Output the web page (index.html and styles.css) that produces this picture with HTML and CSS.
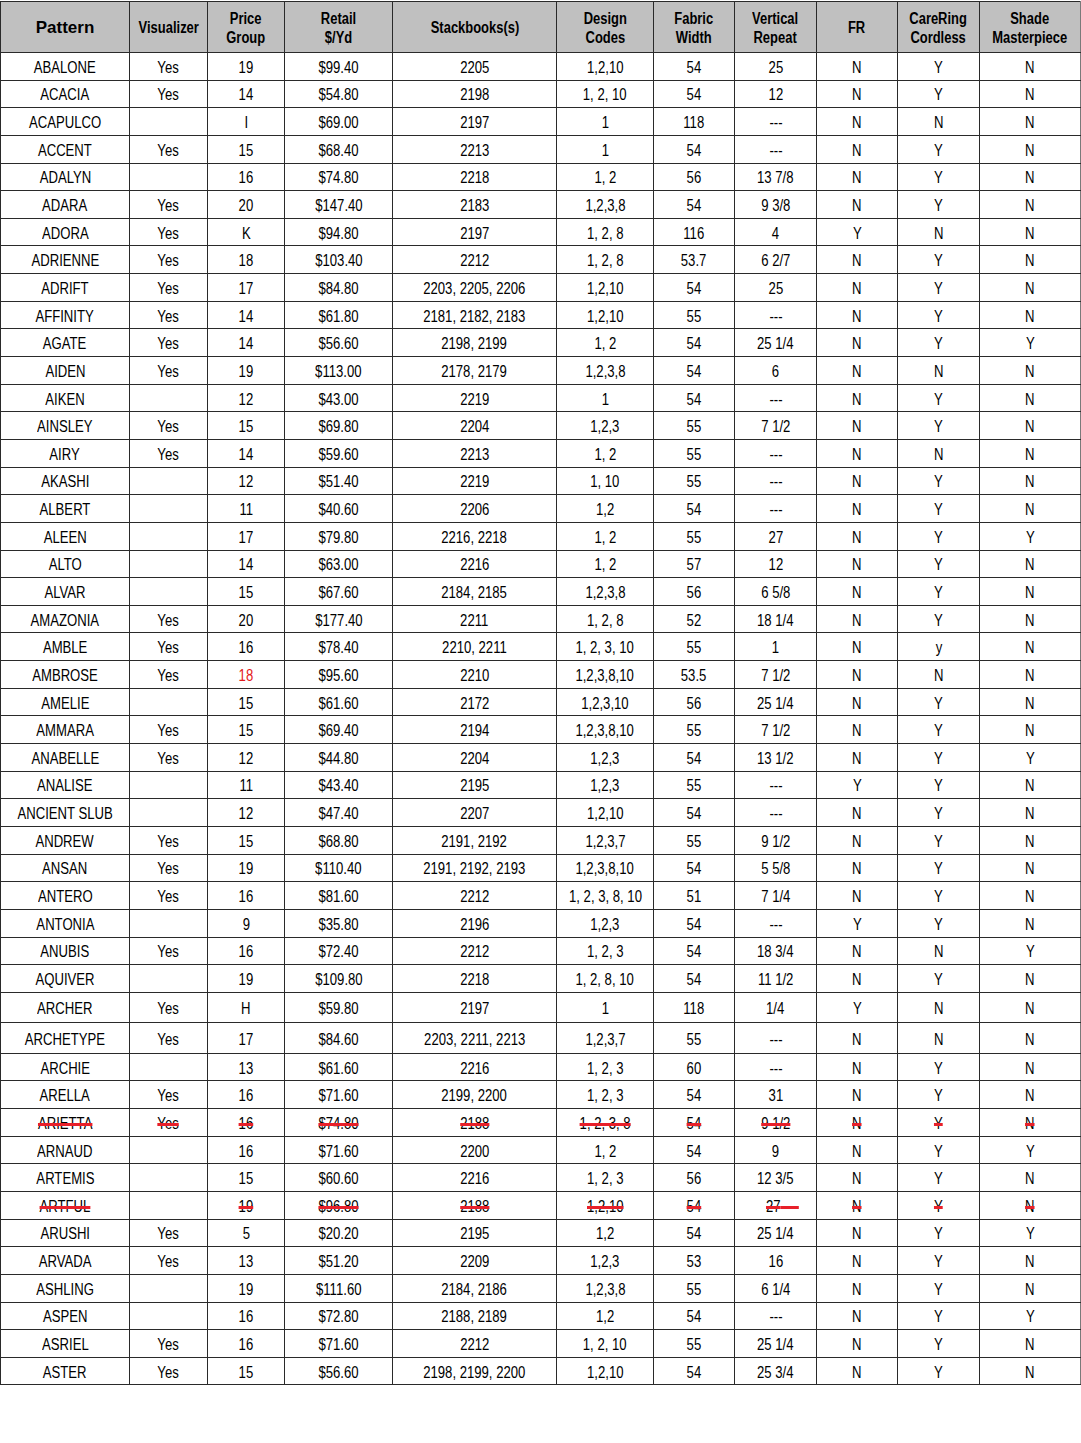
FILE: index.html
```html
<!DOCTYPE html>
<html>
<head>
<meta charset="utf-8">
<link rel="stylesheet" href="styles.css">
</head>
<body>
<table class="grid">
<colgroup>
<col class="c1"><col class="c2"><col class="c3"><col class="c4"><col class="c5"><col class="c6"><col class="c7"><col class="c8"><col class="c9"><col class="c10"><col class="c11">
</colgroup>
<thead>
<tr class="head">
<th class="pattern">Pattern</th><th><span>Visualizer</span></th><th><span>Price<br>Group</span></th><th><span>Retail<br>$/Yd</span></th><th><span>Stackbooks(s)</span></th><th><span>Design<br>Codes</span></th><th><span>Fabric<br>Width</span></th><th><span>Vertical<br>Repeat</span></th><th><span>FR</span></th><th><span>CareRing<br>Cordless</span></th><th><span>Shade<br>Masterpiece</span></th>
</tr>
</thead>
<tbody>
<tr><td><span>ABALONE</span></td><td><span>Yes</span></td><td><span>19</span></td><td><span>$99.40</span></td><td><span>2205</span></td><td><span>1,2,10</span></td><td><span>54</span></td><td><span>25</span></td><td><span>N</span></td><td><span>Y</span></td><td><span>N</span></td></tr>
<tr><td><span>ACACIA</span></td><td><span>Yes</span></td><td><span>14</span></td><td><span>$54.80</span></td><td><span>2198</span></td><td><span>1, 2, 10</span></td><td><span>54</span></td><td><span>12</span></td><td><span>N</span></td><td><span>Y</span></td><td><span>N</span></td></tr>
<tr><td><span>ACAPULCO</span></td><td></td><td><span>I</span></td><td><span>$69.00</span></td><td><span>2197</span></td><td><span>1</span></td><td><span>118</span></td><td><span>---</span></td><td><span>N</span></td><td><span>N</span></td><td><span>N</span></td></tr>
<tr><td><span>ACCENT</span></td><td><span>Yes</span></td><td><span>15</span></td><td><span>$68.40</span></td><td><span>2213</span></td><td><span>1</span></td><td><span>54</span></td><td><span>---</span></td><td><span>N</span></td><td><span>Y</span></td><td><span>N</span></td></tr>
<tr><td><span>ADALYN</span></td><td></td><td><span>16</span></td><td><span>$74.80</span></td><td><span>2218</span></td><td><span>1, 2</span></td><td><span>56</span></td><td><span>13 7/8</span></td><td><span>N</span></td><td><span>Y</span></td><td><span>N</span></td></tr>
<tr><td><span>ADARA</span></td><td><span>Yes</span></td><td><span>20</span></td><td><span>$147.40</span></td><td><span>2183</span></td><td><span>1,2,3,8</span></td><td><span>54</span></td><td><span>9 3/8</span></td><td><span>N</span></td><td><span>Y</span></td><td><span>N</span></td></tr>
<tr><td><span>ADORA</span></td><td><span>Yes</span></td><td><span>K</span></td><td><span>$94.80</span></td><td><span>2197</span></td><td><span>1, 2, 8</span></td><td><span>116</span></td><td><span>4</span></td><td><span>Y</span></td><td><span>N</span></td><td><span>N</span></td></tr>
<tr><td><span>ADRIENNE</span></td><td><span>Yes</span></td><td><span>18</span></td><td><span>$103.40</span></td><td><span>2212</span></td><td><span>1, 2, 8</span></td><td><span>53.7</span></td><td><span>6 2/7</span></td><td><span>N</span></td><td><span>Y</span></td><td><span>N</span></td></tr>
<tr><td><span>ADRIFT</span></td><td><span>Yes</span></td><td><span>17</span></td><td><span>$84.80</span></td><td><span>2203, 2205, 2206</span></td><td><span>1,2,10</span></td><td><span>54</span></td><td><span>25</span></td><td><span>N</span></td><td><span>Y</span></td><td><span>N</span></td></tr>
<tr><td><span>AFFINITY</span></td><td><span>Yes</span></td><td><span>14</span></td><td><span>$61.80</span></td><td><span>2181, 2182, 2183</span></td><td><span>1,2,10</span></td><td><span>55</span></td><td><span>---</span></td><td><span>N</span></td><td><span>Y</span></td><td><span>N</span></td></tr>
<tr><td><span>AGATE</span></td><td><span>Yes</span></td><td><span>14</span></td><td><span>$56.60</span></td><td><span>2198, 2199</span></td><td><span>1, 2</span></td><td><span>54</span></td><td><span>25 1/4</span></td><td><span>N</span></td><td><span>Y</span></td><td><span>Y</span></td></tr>
<tr><td><span>AIDEN</span></td><td><span>Yes</span></td><td><span>19</span></td><td><span>$113.00</span></td><td><span>2178, 2179</span></td><td><span>1,2,3,8</span></td><td><span>54</span></td><td><span>6</span></td><td><span>N</span></td><td><span>N</span></td><td><span>N</span></td></tr>
<tr><td><span>AIKEN</span></td><td></td><td><span>12</span></td><td><span>$43.00</span></td><td><span>2219</span></td><td><span>1</span></td><td><span>54</span></td><td><span>---</span></td><td><span>N</span></td><td><span>Y</span></td><td><span>N</span></td></tr>
<tr><td><span>AINSLEY</span></td><td><span>Yes</span></td><td><span>15</span></td><td><span>$69.80</span></td><td><span>2204</span></td><td><span>1,2,3</span></td><td><span>55</span></td><td><span>7 1/2</span></td><td><span>N</span></td><td><span>Y</span></td><td><span>N</span></td></tr>
<tr><td><span>AIRY</span></td><td><span>Yes</span></td><td><span>14</span></td><td><span>$59.60</span></td><td><span>2213</span></td><td><span>1, 2</span></td><td><span>55</span></td><td><span>---</span></td><td><span>N</span></td><td><span>N</span></td><td><span>N</span></td></tr>
<tr><td><span>AKASHI</span></td><td></td><td><span>12</span></td><td><span>$51.40</span></td><td><span>2219</span></td><td><span>1, 10</span></td><td><span>55</span></td><td><span>---</span></td><td><span>N</span></td><td><span>Y</span></td><td><span>N</span></td></tr>
<tr><td><span>ALBERT</span></td><td></td><td><span>11</span></td><td><span>$40.60</span></td><td><span>2206</span></td><td><span>1,2</span></td><td><span>54</span></td><td><span>---</span></td><td><span>N</span></td><td><span>Y</span></td><td><span>N</span></td></tr>
<tr><td><span>ALEEN</span></td><td></td><td><span>17</span></td><td><span>$79.80</span></td><td><span>2216, 2218</span></td><td><span>1, 2</span></td><td><span>55</span></td><td><span>27</span></td><td><span>N</span></td><td><span>Y</span></td><td><span>Y</span></td></tr>
<tr><td><span>ALTO</span></td><td></td><td><span>14</span></td><td><span>$63.00</span></td><td><span>2216</span></td><td><span>1, 2</span></td><td><span>57</span></td><td><span>12</span></td><td><span>N</span></td><td><span>Y</span></td><td><span>N</span></td></tr>
<tr><td><span>ALVAR</span></td><td></td><td><span>15</span></td><td><span>$67.60</span></td><td><span>2184, 2185</span></td><td><span>1,2,3,8</span></td><td><span>56</span></td><td><span>6 5/8</span></td><td><span>N</span></td><td><span>Y</span></td><td><span>N</span></td></tr>
<tr><td><span>AMAZONIA</span></td><td><span>Yes</span></td><td><span>20</span></td><td><span>$177.40</span></td><td><span>2211</span></td><td><span>1, 2, 8</span></td><td><span>52</span></td><td><span>18 1/4</span></td><td><span>N</span></td><td><span>Y</span></td><td><span>N</span></td></tr>
<tr><td><span>AMBLE</span></td><td><span>Yes</span></td><td><span>16</span></td><td><span>$78.40</span></td><td><span>2210, 2211</span></td><td><span>1, 2, 3, 10</span></td><td><span>55</span></td><td><span>1</span></td><td><span>N</span></td><td><span>y</span></td><td><span>N</span></td></tr>
<tr><td><span>AMBROSE</span></td><td><span>Yes</span></td><td class="red"><span>18</span></td><td><span>$95.60</span></td><td><span>2210</span></td><td><span>1,2,3,8,10</span></td><td><span>53.5</span></td><td><span>7 1/2</span></td><td><span>N</span></td><td><span>N</span></td><td><span>N</span></td></tr>
<tr><td><span>AMELIE</span></td><td></td><td><span>15</span></td><td><span>$61.60</span></td><td><span>2172</span></td><td><span>1,2,3,10</span></td><td><span>56</span></td><td><span>25 1/4</span></td><td><span>N</span></td><td><span>Y</span></td><td><span>N</span></td></tr>
<tr><td><span>AMMARA</span></td><td><span>Yes</span></td><td><span>15</span></td><td><span>$69.40</span></td><td><span>2194</span></td><td><span>1,2,3,8,10</span></td><td><span>55</span></td><td><span>7 1/2</span></td><td><span>N</span></td><td><span>Y</span></td><td><span>N</span></td></tr>
<tr><td><span>ANABELLE</span></td><td><span>Yes</span></td><td><span>12</span></td><td><span>$44.80</span></td><td><span>2204</span></td><td><span>1,2,3</span></td><td><span>54</span></td><td><span>13 1/2</span></td><td><span>N</span></td><td><span>Y</span></td><td><span>Y</span></td></tr>
<tr><td><span>ANALISE</span></td><td></td><td><span>11</span></td><td><span>$43.40</span></td><td><span>2195</span></td><td><span>1,2,3</span></td><td><span>55</span></td><td><span>---</span></td><td><span>Y</span></td><td><span>Y</span></td><td><span>N</span></td></tr>
<tr><td><span>ANCIENT SLUB</span></td><td></td><td><span>12</span></td><td><span>$47.40</span></td><td><span>2207</span></td><td><span>1,2,10</span></td><td><span>54</span></td><td><span>---</span></td><td><span>N</span></td><td><span>Y</span></td><td><span>N</span></td></tr>
<tr><td><span>ANDREW</span></td><td><span>Yes</span></td><td><span>15</span></td><td><span>$68.80</span></td><td><span>2191, 2192</span></td><td><span>1,2,3,7</span></td><td><span>55</span></td><td><span>9 1/2</span></td><td><span>N</span></td><td><span>Y</span></td><td><span>N</span></td></tr>
<tr><td><span>ANSAN</span></td><td><span>Yes</span></td><td><span>19</span></td><td><span>$110.40</span></td><td><span>2191, 2192, 2193</span></td><td><span>1,2,3,8,10</span></td><td><span>54</span></td><td><span>5 5/8</span></td><td><span>N</span></td><td><span>Y</span></td><td><span>N</span></td></tr>
<tr><td><span>ANTERO</span></td><td><span>Yes</span></td><td><span>16</span></td><td><span>$81.60</span></td><td><span>2212</span></td><td><span>1, 2, 3, 8, 10</span></td><td><span>51</span></td><td><span>7 1/4</span></td><td><span>N</span></td><td><span>Y</span></td><td><span>N</span></td></tr>
<tr><td><span>ANTONIA</span></td><td></td><td><span>9</span></td><td><span>$35.80</span></td><td><span>2196</span></td><td><span>1,2,3</span></td><td><span>54</span></td><td><span>---</span></td><td><span>Y</span></td><td><span>Y</span></td><td><span>N</span></td></tr>
<tr><td><span>ANUBIS</span></td><td><span>Yes</span></td><td><span>16</span></td><td><span>$72.40</span></td><td><span>2212</span></td><td><span>1, 2, 3</span></td><td><span>54</span></td><td><span>18 3/4</span></td><td><span>N</span></td><td><span>N</span></td><td><span>Y</span></td></tr>
<tr><td><span>AQUIVER</span></td><td></td><td><span>19</span></td><td><span>$109.80</span></td><td><span>2218</span></td><td><span>1, 2, 8, 10</span></td><td><span>54</span></td><td><span>11 1/2</span></td><td><span>N</span></td><td><span>Y</span></td><td><span>N</span></td></tr>
<tr class="tall"><td><span>ARCHER</span></td><td><span>Yes</span></td><td><span>H</span></td><td><span>$59.80</span></td><td><span>2197</span></td><td><span>1</span></td><td><span>118</span></td><td><span>1/4</span></td><td><span>Y</span></td><td><span>N</span></td><td><span>N</span></td></tr>
<tr class="tall"><td><span>ARCHETYPE</span></td><td><span>Yes</span></td><td><span>17</span></td><td><span>$84.60</span></td><td><span>2203, 2211, 2213</span></td><td><span>1,2,3,7</span></td><td><span>55</span></td><td><span>---</span></td><td><span>N</span></td><td><span>N</span></td><td><span>N</span></td></tr>
<tr><td><span>ARCHIE</span></td><td></td><td><span>13</span></td><td><span>$61.60</span></td><td><span>2216</span></td><td><span>1, 2, 3</span></td><td><span>60</span></td><td><span>---</span></td><td><span>N</span></td><td><span>Y</span></td><td><span>N</span></td></tr>
<tr><td><span>ARELLA</span></td><td><span>Yes</span></td><td><span>16</span></td><td><span>$71.60</span></td><td><span>2199, 2200</span></td><td><span>1, 2, 3</span></td><td><span>54</span></td><td><span>31</span></td><td><span>N</span></td><td><span>Y</span></td><td><span>N</span></td></tr>
<tr class="struck"><td><span><s>ARIETTA</s></span></td><td><span><s>Yes</s></span></td><td><span><s>16</s></span></td><td><span><s>$74.80</s></span></td><td><span><s>2188</s></span></td><td><span><s>1, 2, 3, 8</s></span></td><td><span><s>54</s></span></td><td><span><s>9 1/2</s></span></td><td><span><s>N</s></span></td><td><span><s>Y</s></span></td><td><span><s>N</s></span></td></tr>
<tr><td><span>ARNAUD</span></td><td></td><td><span>16</span></td><td><span>$71.60</span></td><td><span>2200</span></td><td><span>1, 2</span></td><td><span>54</span></td><td><span>9</span></td><td><span>N</span></td><td><span>Y</span></td><td><span>Y</span></td></tr>
<tr><td><span>ARTEMIS</span></td><td></td><td><span>15</span></td><td><span>$60.60</span></td><td><span>2216</span></td><td><span>1, 2, 3</span></td><td><span>56</span></td><td><span>12 3/5</span></td><td><span>N</span></td><td><span>Y</span></td><td><span>N</span></td></tr>
<tr class="struck"><td><span><s>ARTFUL</s></span></td><td></td><td><span><s>19</s></span></td><td><span><s>$96.80</s></span></td><td><span><s>2188</s></span></td><td><span><s>1,2,10</s></span></td><td><span><s>54</s></span></td><td><span><s>27<span class="tail">&nbsp;&nbsp;&nbsp;&nbsp;&nbsp;</span></s></span></td><td><span><s>N</s></span></td><td><span><s>Y</s></span></td><td><span><s>N</s></span></td></tr>
<tr><td><span>ARUSHI</span></td><td><span>Yes</span></td><td><span>5</span></td><td><span>$20.20</span></td><td><span>2195</span></td><td><span>1,2</span></td><td><span>54</span></td><td><span>25 1/4</span></td><td><span>N</span></td><td><span>Y</span></td><td><span>Y</span></td></tr>
<tr><td><span>ARVADA</span></td><td><span>Yes</span></td><td><span>13</span></td><td><span>$51.20</span></td><td><span>2209</span></td><td><span>1,2,3</span></td><td><span>53</span></td><td><span>16</span></td><td><span>N</span></td><td><span>Y</span></td><td><span>N</span></td></tr>
<tr><td><span>ASHLING</span></td><td></td><td><span>19</span></td><td><span>$111.60</span></td><td><span>2184, 2186</span></td><td><span>1,2,3,8</span></td><td><span>55</span></td><td><span>6 1/4</span></td><td><span>N</span></td><td><span>Y</span></td><td><span>N</span></td></tr>
<tr><td><span>ASPEN</span></td><td></td><td><span>16</span></td><td><span>$72.80</span></td><td><span>2188, 2189</span></td><td><span>1,2</span></td><td><span>54</span></td><td><span>---</span></td><td><span>N</span></td><td><span>Y</span></td><td><span>Y</span></td></tr>
<tr><td><span>ASRIEL</span></td><td><span>Yes</span></td><td><span>16</span></td><td><span>$71.60</span></td><td><span>2212</span></td><td><span>1, 2, 10</span></td><td><span>55</span></td><td><span>25 1/4</span></td><td><span>N</span></td><td><span>Y</span></td><td><span>N</span></td></tr>
<tr><td><span>ASTER</span></td><td><span>Yes</span></td><td><span>15</span></td><td><span>$56.60</span></td><td><span>2198, 2199, 2200</span></td><td><span>1,2,10</span></td><td><span>54</span></td><td><span>25 3/4</span></td><td><span>N</span></td><td><span>Y</span></td><td><span>N</span></td></tr>
</tbody>
</table>
</body>
</html>
```

FILE: styles.css
```css
html, body {
  margin: 0;
  padding: 0;
  background: #ffffff;
}

body {
  padding-top: 1px;
  font-family: "Liberation Sans", Arial, sans-serif;
  color: #000;
}

.grid {
  border-collapse: collapse;
  table-layout: fixed;
  width: 1081px;
  font-size: 16px;
}

.c1 { width: 129px; }
.c2 { width: 78px; }
.c3 { width: 77px; }
.c4 { width: 108px; }
.c5 { width: 164px; }
.c6 { width: 97px; }
.c7 { width: 81px; }
.c8 { width: 82px; }
.c9 { width: 81px; }
.c10 { width: 82px; }
.c11 { width: 101px; }

.grid th,
.grid td {
  border: 1px solid #2a2a2a;
  padding: 0;
  text-align: center;
  vertical-align: middle;
  white-space: nowrap;
}

.grid th > span,
.grid td > span {
  display: inline-block;
  transform: scaleX(0.82);
  transform-origin: 50% 50%;
}

.grid th:nth-child(3), .grid td:nth-child(3),
.grid th:nth-child(4), .grid td:nth-child(4),
.grid th:nth-child(5), .grid td:nth-child(5),
.grid th:nth-child(8), .grid td:nth-child(8),
.grid th:nth-child(10), .grid td:nth-child(10) {
  border-left-color: #7a7a7a;
}

.grid th:last-child, .grid td:last-child {
  border-right-color: #7a7a7a;
}

.head th {
  background: #c0c0c0;
  height: 49px;
  padding-top: 1px;
  font-weight: bold;
  font-size: 15.8px;
  line-height: 19px;
}

.head th.pattern {
  font-size: 17px;
}

.grid tbody tr {
  height: 27.65px;
}

.grid tbody tr.tall {
  height: 30.5px;
}

.grid tbody td {
  line-height: 18px;
  padding-top: 3px;
}

.red {
  color: #e41b1b;
}

.struck s {
  text-decoration: line-through;
  text-decoration-color: #e8202a;
  text-decoration-thickness: 3px;
}

.tail {
  margin-right: -18px;
}
```
